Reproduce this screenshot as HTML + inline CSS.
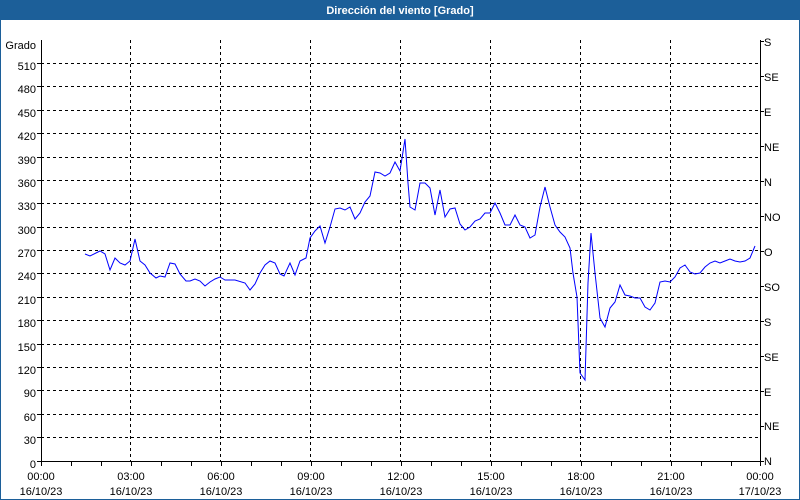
<!DOCTYPE html>
<html><head><meta charset="utf-8"><style>
html,body{margin:0;padding:0;background:#fff}
svg{display:block}
text{font-family:"Liberation Sans",sans-serif;font-size:11px;fill:#000}
</style></head><body>
<svg width="800" height="500" viewBox="0 0 800 500" xmlns="http://www.w3.org/2000/svg">
<rect x="0" y="0" width="800" height="500" fill="#fff"/>
<rect x="0" y="0" width="800" height="20" fill="#1c5f99"/>
<rect x="0.5" y="0.5" width="799" height="499" fill="none" stroke="#1c5f99"/>
<text x="400" y="14" text-anchor="middle" style="fill:#fff;font-weight:bold;font-size:11px">Dirección del viento [Grado]</text>
<g stroke="#000" stroke-dasharray="3,3" stroke-width="1">
<path d="M41 437.5H760M41 414.5H760M41 390.5H760M41 367.5H760M41 344.5H760M41 320.5H760M41 297.5H760M41 273.5H760M41 250.5H760M41 227.5H760M41 203.5H760M41 180.5H760M41 157.5H760M41 133.5H760M41 110.5H760M41 86.5H760M41 63.5H760"/>
<path d="M130.5 40V461M220.5 40V461M310.5 40V461M400.5 40V461M490.5 40V461M580.5 40V461M670.5 40V461"/>
</g>
<path d="M41.5 40V461.5H760.5V40" fill="none" stroke="#000"/>
<g stroke="#000"><path d="M71.5 461V466M101.5 461V466M131.5 461V466M161.5 461V466M191.5 461V466M221.5 461V466M251.5 461V466M281.5 461V466M311.5 461V466M341.5 461V466M371.5 461V466M401.5 461V466M431.5 461V466M461.5 461V466M491.5 461V466M521.5 461V466M551.5 461V466M581.5 461V466M611.5 461V466M641.5 461V466M671.5 461V466M701.5 461V466M731.5 461V466M760.5 461V466M41.5 461V466"/>
<path d="M37 461.5H41M37 437.5H41M37 414.5H41M37 390.5H41M37 367.5H41M37 344.5H41M37 320.5H41M37 297.5H41M37 273.5H41M37 250.5H41M37 227.5H41M37 203.5H41M37 180.5H41M37 157.5H41M37 133.5H41M37 110.5H41M37 86.5H41M37 63.5H41"/>
<path d="M760 461.5H764M760 426.5H764M760 391.5H764M760 356.5H764M760 321.5H764M760 286.5H764M760 251.5H764M760 216.5H764M760 181.5H764M760 146.5H764M760 111.5H764M760 76.5H764M760 41.5H764"/></g>
<g text-anchor="end">
<text x="36" y="49">Grado</text>
<text x="36" y="468">0</text><text x="36" y="444">30</text><text x="36" y="421">60</text><text x="36" y="397">90</text><text x="36" y="374">120</text><text x="36" y="351">150</text><text x="36" y="327">180</text><text x="36" y="304">210</text><text x="36" y="280">240</text><text x="36" y="257">270</text><text x="36" y="234">300</text><text x="36" y="210">330</text><text x="36" y="187">360</text><text x="36" y="164">390</text><text x="36" y="140">420</text><text x="36" y="117">450</text><text x="36" y="93">480</text><text x="36" y="70">510</text>
</g>
<g>
<text x="764" y="465">N</text><text x="764" y="430">NE</text><text x="764" y="396">E</text><text x="764" y="361">SE</text><text x="764" y="326">S</text><text x="764" y="291">SO</text><text x="764" y="256">O</text><text x="764" y="221">NO</text><text x="764" y="186">N</text><text x="764" y="151">NE</text><text x="764" y="116">E</text><text x="764" y="81">SE</text><text x="764" y="46">S</text>
</g>
<g text-anchor="middle">
<text x="41" y="480">00:00</text><text x="41" y="495">16/10/23</text>
<text x="131" y="480">03:00</text><text x="131" y="495">16/10/23</text>
<text x="221" y="480">06:00</text><text x="221" y="495">16/10/23</text>
<text x="311" y="480">09:00</text><text x="311" y="495">16/10/23</text>
<text x="401" y="480">12:00</text><text x="401" y="495">16/10/23</text>
<text x="491" y="480">15:00</text><text x="491" y="495">16/10/23</text>
<text x="581" y="480">18:00</text><text x="581" y="495">16/10/23</text>
<text x="671" y="480">21:00</text><text x="671" y="495">16/10/23</text>
<text x="760" y="480">00:00</text><text x="760" y="495">17/10/23</text>
</g>
<polyline fill="none" stroke="#0000ff" stroke-width="1" points="85,254 90,256 100,251 105,254 110,270 115,258 120,263 125,265 130,261 135,239 140,261 145,265 150,273 156,278 160,276 165,277 170,263 175,264 180,274 186,281 190,281 195,279 200,281 205,286 210,282 215,279 220,277 225,280 235,280 245,283 250,290 255,284 260,273 265,265 270,261 275,263 280,274 284,276 290,263 295,275 300,261 306,258 310,238 315,231 320,226 325,243 330,227 335,209 340,208 345,210 350,207 355,219 360,213 365,202 370,196 375,172 380,173 385,176 390,173 395,162 400,171 405,139 408,183 410,207 415,210 420,183 425,183 430,188 435,215 440,190 445,217 450,209 455,208 460,224 465,230 470,227 475,221 480,219 485,213 490,213 495,203 500,213 505,225 510,225 515,215 520,225 525,227 530,238 535,235 540,207 545,187 550,207 555,225 560,232 565,237 570,248 573,273 577,297 580,373 585,380 588,283 591,233 595,273 600,318 605,327 610,308 615,302 620,285 625,295 630,296 635,298 640,298 645,307 650,310 655,303 660,282 665,281 670,282 675,277 680,268 685,265 690,272 695,274 700,273 705,267 710,263 715,261 720,263 725,261 730,259 735,261 740,262 745,261 750,258 755,246"/>
</svg>
</body></html>
